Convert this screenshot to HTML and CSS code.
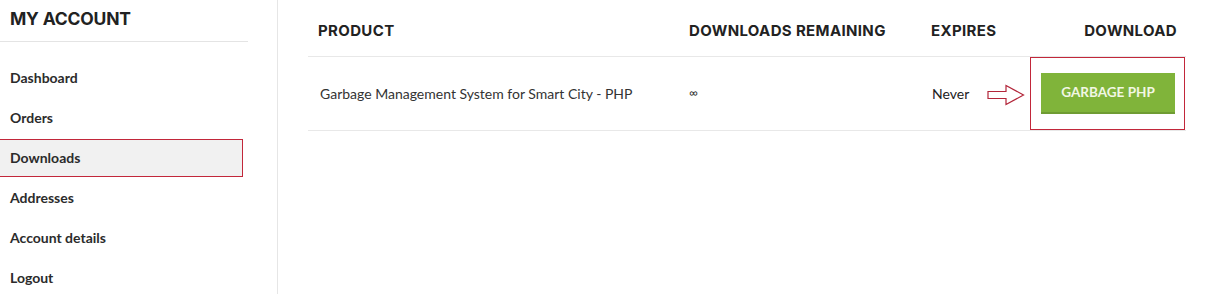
FILE: index.html
```html
<!DOCTYPE html>
<html>
<head>
<meta charset="utf-8">
<link rel="stylesheet" href="styles.css">
</head>
<body>
<div class="page">
  <aside class="sidebar">
    <h2 class="title">MY ACCOUNT</h2>
    <nav class="nav">
      <a class="nav-item">Dashboard</a>
      <a class="nav-item">Orders</a>
      <a class="nav-item active">Downloads</a>
      <a class="nav-item">Addresses</a>
      <a class="nav-item">Account details</a>
      <a class="nav-item">Logout</a>
    </nav>
  </aside>
  <main class="main">
    <table class="downloads">
      <colgroup>
        <col class="c1"><col class="c2"><col class="c3"><col class="c4">
      </colgroup>
      <thead>
        <tr>
          <th>PRODUCT</th>
          <th>DOWNLOADS REMAINING</th>
          <th>EXPIRES</th>
          <th class="right">DOWNLOAD</th>
        </tr>
      </thead>
      <tbody>
        <tr>
          <td>Garbage Management System for Smart City - PHP</td>
          <td class="inf">∞</td>
          <td><span class="expires">Never<svg class="arrow" width="38" height="22" viewBox="0 0 38 22"><path d="M1 7.5 H19 V1.5 L36.5 11 L19 20.5 V14.5 H1 Z" fill="#fff" stroke="#b3263a" stroke-width="1.2"/></svg></span></td>
          <td class="dl-cell"><div class="dl-box"><a class="btn">GARBAGE PHP</a></div></td>
        </tr>
      </tbody>
    </table>
  </main>
</div>
</body>
</html>
```

FILE: styles.css
```css
* { box-sizing: border-box; }
html, body { margin: 0; padding: 0; background: #fff; }
body { font-family: "Lato", "Liberation Sans", sans-serif; color: #2b2b2b; }

.page { display: flex; min-height: 294px; }

.sidebar {
  width: 278px;
  flex: none;
  border-right: 1px solid #e6e6e6;
}
.title {
  margin: 0;
  width: 248px;
  height: 42px;
  padding: 8px 0 0 10px;
  font-family: "Inter", "DejaVu Sans", sans-serif;
  font-weight: 700;
  font-size: 17.5px;
  letter-spacing: -0.2px;
  line-height: 22px;
  color: #222;
  border-bottom: 1px solid #e4e4e4;
}
.nav { display: flex; flex-direction: column; width: 243px; padding-top: 15px; }
.nav-item {
  display: flex;
  align-items: center;
  height: 40px;
  padding-left: 10px;
  font-weight: 700;
  font-size: 14px;
  color: #2b2b2b;
  text-decoration: none;
}
.nav-item.active {
  background: #f1f1f1;
  border: 1px solid #c2273a;
  border-left: none;
  height: 38px;
  margin: 2px 0 0;
  padding-bottom: 2px;
}

.main { flex: 1; padding-left: 30px; }
.downloads { width: 878px; border-collapse: collapse; table-layout: fixed; }
.c1 { width: 371px; }
.c2 { width: 242px; }
.c3 { width: 100px; }
.c4 { width: 165px; }
.downloads th {
  height: 56px;
  padding: 5px 10px 0;
  text-align: left;
  font-family: "Inter", "DejaVu Sans", sans-serif;
  font-weight: 700;
  font-size: 15px;
  letter-spacing: 0.35px;
  color: #222;
  border-bottom: 1px solid #e8e8e8;
  white-space: nowrap;
}
.downloads th.right { text-align: right; padding-right: 9px; }
.downloads td {
  height: 74px;
  padding: 0 10px;
  font-size: 14px;
  color: #333;
  border-bottom: 1px solid #e8e8e8;
  vertical-align: middle;
  white-space: nowrap;
}
.downloads td:first-child { padding-left: 12px; }
.downloads td.inf { font-size: 12px; padding-bottom: 2px; }
.expires { display: inline-flex; align-items: center; gap: 18px; color: #222; padding-top: 1px; padding-left: 1px; }
.arrow { display: block; margin-top: 2px; }

.downloads td.dl-cell { padding: 0; text-align: right; }
.dl-box {
  display: flex;
  justify-content: center;
  align-items: center;
  margin-left: 9px;
  width: 155px;
  height: 73px;
  border: 1px solid #c2273a;
}
.btn {
  display: flex;
  align-items: center;
  justify-content: center;
  width: 134px;
  height: 41px;
  background: #80b43a;
  border-bottom: 2px solid #6f9c33;
  color: #f2f7e4;
  font-weight: 700;
  font-size: 13.5px;
  letter-spacing: 0;
  text-decoration: none;
  margin-left: 1px;
}
```
